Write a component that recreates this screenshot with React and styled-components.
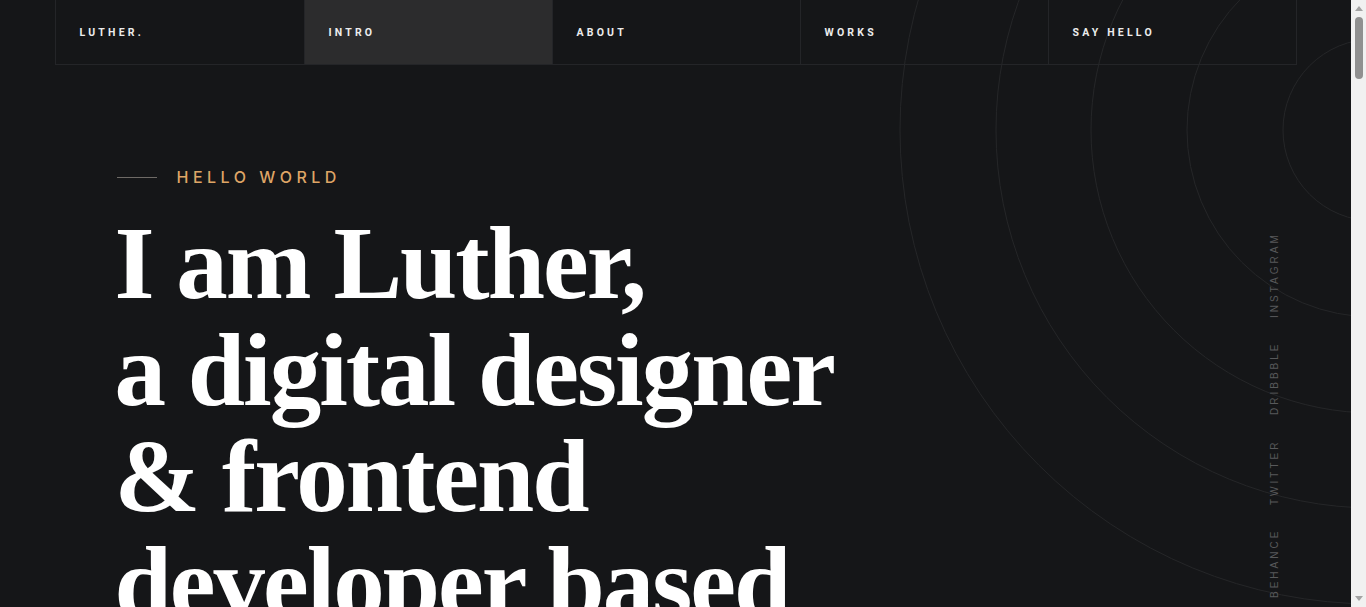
import styled, { createGlobalStyle } from "styled-components";

const GlobalStyle = createGlobalStyle`
  html, body {
    margin: 0;
    padding: 0;
    background: #151618;
    overflow: hidden;
  }
  body {
    font-family: "Inter", "Liberation Sans", sans-serif;
    color: #ffffff;
  }
  * {
    box-sizing: border-box;
  }
`;

const Shell = styled.div`
  display: flex;
  height: 100vh;
`;

const Viewport = styled.main`
  position: relative;
  flex: 1;
  min-width: 0;
  overflow: hidden;
`;

const ScrollBar = styled.div`
  width: 15px;
  background: #f1f1f1;
  display: flex;
  flex-direction: column;
  align-items: center;
`;

const Arrow = styled.span`
  height: 17px;
  display: flex;
  align-items: center;
  justify-content: center;
  &::before {
    content: "";
    border-left: 4px solid transparent;
    border-right: 4px solid transparent;
    ${(p) =>
      p.$down
        ? "border-top: 5px solid #a3a3a3;"
        : "border-bottom: 5px solid #a3a3a3;"}
  }
`;

const Track = styled.div`
  flex: 1;
  width: 100%;
  display: flex;
  justify-content: center;
`;

const Thumb = styled.div`
  width: 8px;
  height: 62px;
  border-radius: 4px;
  background: #909090;
`;

const Rings = styled.svg`
  position: absolute;
  top: 0;
  right: 0;
  width: 480px;
  height: 700px;
  pointer-events: none;
`;

const Container = styled.div`
  width: 1242px;
  margin: 0 auto;
  position: relative;
`;

const Nav = styled.nav`
  display: grid;
  grid-template-columns: repeat(5, 1fr);
  height: 65px;
  border: 1px solid #242528;
  border-top: none;
`;

const NavItem = styled.a`
  display: flex;
  align-items: center;
  padding: 0 0 0 24px;
  background: ${(p) => (p.$active ? "#2c2c2d" : "transparent")};
  border-left: ${(p) => (p.$first ? "none" : "1px solid #242528")};
  color: #ececec;
  font-family: "Roboto", "Liberation Sans", sans-serif;
  font-weight: 700;
  font-size: 10.5px;
  letter-spacing: 3.2px;
  text-transform: uppercase;
  text-decoration: none;
`;

const Hero = styled.section`
  padding: 102px 0 0 62px;
`;

const Eyebrow = styled.div`
  display: flex;
  align-items: center;
  gap: 20px;
  height: 20px;
`;

const Rule = styled.span`
  width: 40px;
  height: 1px;
  background: #6e6a66;
`;

const EyebrowText = styled.span`
  font-family: "Inter", "Liberation Sans", sans-serif;
  font-size: 16px;
  font-weight: 500;
  letter-spacing: 4.5px;
  color: #dea566;
`;

const Headline = styled.h1`
  margin: 23px 0 0 -2px;
  font-family: "Liberation Serif", "DejaVu Serif", serif;
  font-weight: 700;
  font-size: 103px;
  line-height: 106.5px;
  letter-spacing: -2px;
  color: #ffffff;
`;

const Socials = styled.ul`
  position: absolute;
  top: 233px;
  left: 1269px;
  margin: 0;
  padding: 0;
  list-style: none;
  display: flex;
  gap: 24px;
  writing-mode: vertical-rl;
  transform: rotate(180deg);
  height: 365px;
`;

const SocialLink = styled.li`
  font-family: "Liberation Sans", "Inter", sans-serif;
  font-size: 10px;
  letter-spacing: 3px;
  color: #58595b;
  text-transform: uppercase;
`;

const navItems = ["Luther.", "Intro", "About", "Works", "Say Hello"];
const socials = ["Behance", "Twitter", "Dribbble", "Instagram"];
const radii = [91, 187, 283, 378, 474];

export default function App() {
  return (
    <>
      <GlobalStyle />
      <Shell>
        <Viewport>
          <Rings viewBox="0 0 480 700">
            {radii.map((r) => (
              <circle
                key={r}
                cx={503}
                cy={130}
                r={r}
                fill="none"
                stroke="#252628"
                strokeWidth="1"
              />
            ))}
          </Rings>
          <Container>
            <Nav>
              {navItems.map((item, i) => (
                <NavItem key={item} href="#" $first={i === 0} $active={i === 1}>
                  {item}
                </NavItem>
              ))}
            </Nav>
            <Hero>
              <Eyebrow>
                <Rule />
                <EyebrowText>HELLO WORLD</EyebrowText>
              </Eyebrow>
              <Headline>
                I am Luther,
                <br />a digital designer
                <br />& frontend
                <br />developer based
              </Headline>
            </Hero>
          </Container>
          <Socials>
            {socials.map((s) => (
              <SocialLink key={s}>{s}</SocialLink>
            ))}
          </Socials>
        </Viewport>
        <ScrollBar>
          <Arrow />
          <Track>
            <Thumb />
          </Track>
          <Arrow $down />
        </ScrollBar>
      </Shell>
    </>
  );
}
